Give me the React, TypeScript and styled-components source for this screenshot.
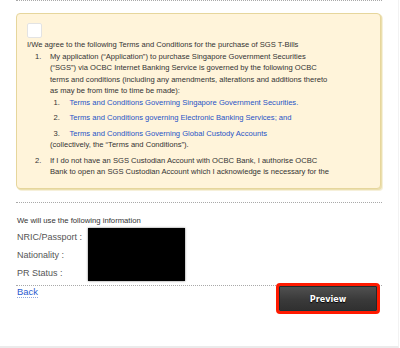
import React from "react";
import styled, { createGlobalStyle } from "styled-components";

const GlobalStyle = createGlobalStyle`
  html, body { margin: 0; padding: 0; background: #fff; }
  body { font-family: "Liberation Sans", Arial, Helvetica, sans-serif; }
  * { box-sizing: border-box; }
`;

const Frame = styled.div`
  width: 399px;
  height: 348px;
  border-right: 1px solid #f2f2f2;
  border-bottom: 2px solid #ebebeb;
  overflow: hidden;
`;

const Column = styled.div`
  margin-left: 16px;
  width: 366px;
  display: flex;
  flex-direction: column;
`;

const Rule = styled.div<{ $gap?: number }>`
  border-top: 1px dotted #a9a9a9;
  height: 0;
  margin-top: ${(p) => p.$gap ?? 0}px;
`;

const TermsBox = styled.div`
  margin-top: 12px;
  width: 365px;
  height: 176px;
  background: #fff4da;
  border: 1px solid #e6d69c;
  border-radius: 4px;
  box-shadow: 1px 1px 0 #ebdfae, 2px 2px 0 #f6f0da;
  padding: 9px 10px 10px 10px;
`;

const Scroll = styled.div`
  height: 155px;
  overflow: hidden;
  font-size: 7.6px;
  line-height: 11.5px;
  color: #333;
  white-space: nowrap;
`;

const Checkbox = styled.div`
  width: 15px;
  height: 15px;
  background: #fff;
  border: 1px solid #e3e3e3;
  border-radius: 2px;
  margin-bottom: 1px;
`;

const List = styled.ol`
  list-style: none;
  margin: 0;
  padding: 0 0 0 8px;
`;

const Item = styled.li<{ $gap?: number }>`
  display: flex;
  margin-top: ${(p) => p.$gap ?? 0}px;
`;

const Num = styled.span<{ $w: number }>`
  flex: 0 0 ${(p) => p.$w}px;
`;

const Body = styled.div`
  display: flex;
  flex-direction: column;
`;

const SubList = styled.ol`
  list-style: none;
  margin: 0;
  padding: 0 0 0 3.5px;
`;

const Link = styled.a`
  color: #1f53c6;
  text-decoration: none;
`;

const Info = styled.div`
  margin-top: 12px;
  padding-left: 1px;
  font-size: 7.7px;
  line-height: 12px;
  color: #333;
`;

const InfoGrid = styled.div`
  margin-top: 1px;
  display: grid;
  grid-template-columns: 71px 97px;
  grid-template-rows: repeat(3, 18px);
  padding-left: 1px;
`;

const Label = styled.div<{ $row: number }>`
  grid-column: 1;
  grid-row: ${(p) => p.$row};
  font-size: 9px;
  line-height: 18px;
  color: #555;
`;

const Redacted = styled.div`
  grid-column: 2;
  grid-row: 1 / span 3;
  height: 53px;
  background: #000;
  box-shadow: 0 0 2px rgba(0, 0, 0, 0.55);
`;

const Footer = styled.div`
  margin-top: 3px;
  border-top: 1px dotted #a9a9a9;
  display: flex;
  justify-content: space-between;
  align-items: flex-start;
`;

const Back = styled.a`
  margin-left: 1px;
  font-size: 9.4px;
  line-height: 11px;
  color: #2a5bd0;
  text-decoration: none;
  border-bottom: 1px dotted #8fa6dd;
`;

const PreviewButton = styled.button`
  margin-right: 5px;
  width: 98px;
  height: 25px;
  padding: 0;
  border: 1px solid #1f2a2c;
  border-bottom-color: #1d3438;
  border-radius: 1px;
  background: linear-gradient(#505050, #3a3a3a 55%, #303030);
  outline: 3px solid #ff1a00;
  outline-offset: 0;
  color: #fff;
  font-family: "DejaVu Sans Condensed", "Liberation Sans", Arial, sans-serif;
  font-weight: bold;
  font-size: 9px;
  text-shadow: 0 1px 1px #000;
  cursor: pointer;
`;

export default function App() {
  return (
    <>
      <GlobalStyle />
      <Frame>
        <Column>
          <Rule />
          <TermsBox>
            <Scroll>
              <Checkbox />
              <div>I/We agree to the following Terms and Conditions for the purchase of SGS T-Bills</div>
              <List>
                <Item>
                  <Num $w={15}>1.</Num>
                  <Body>
                    <span>My application (“Application”) to purchase Singapore Government Securities</span>
                    <span>(“SGS”) via OCBC Internet Banking Service is governed by the following OCBC</span>
                    <span>terms and conditions (including any amendments, alterations and additions thereto</span>
                    <span>as may be from time to time be made):</span>
                    <SubList>
                      <Item>
                        <Num $w={16}>1.</Num>
                        <Link href="#">Terms and Conditions Governing Singapore Government Securities.</Link>
                      </Item>
                      <Item $gap={4}>
                        <Num $w={16}>2.</Num>
                        <Link href="#">Terms and Conditions governing Electronic Banking Services; and</Link>
                      </Item>
                      <Item $gap={4}>
                        <Num $w={16}>3.</Num>
                        <Link href="#">Terms and Conditions Governing Global Custody Accounts</Link>
                      </Item>
                    </SubList>
                    <span>(collectively, the “Terms and Conditions”).</span>
                  </Body>
                </Item>
                <Item $gap={4}>
                  <Num $w={15}>2.</Num>
                  <Body>
                    <span>If I do not have an SGS Custodian Account with OCBC Bank, I authorise OCBC</span>
                    <span>Bank to open an SGS Custodian Account which I acknowledge is necessary for the</span>
                  </Body>
                </Item>
              </List>
            </Scroll>
          </TermsBox>
          <Rule $gap={13} />
          <Info>We will use the following information</Info>
          <InfoGrid>
            <Label $row={1}>NRIC/Passport :</Label>
            <Label $row={2}>Nationality :</Label>
            <Label $row={3}>PR Status :</Label>
            <Redacted />
          </InfoGrid>
          <Footer>
            <Back href="#">Back</Back>
            <PreviewButton>Preview</PreviewButton>
          </Footer>
        </Column>
      </Frame>
    </>
  );
}
